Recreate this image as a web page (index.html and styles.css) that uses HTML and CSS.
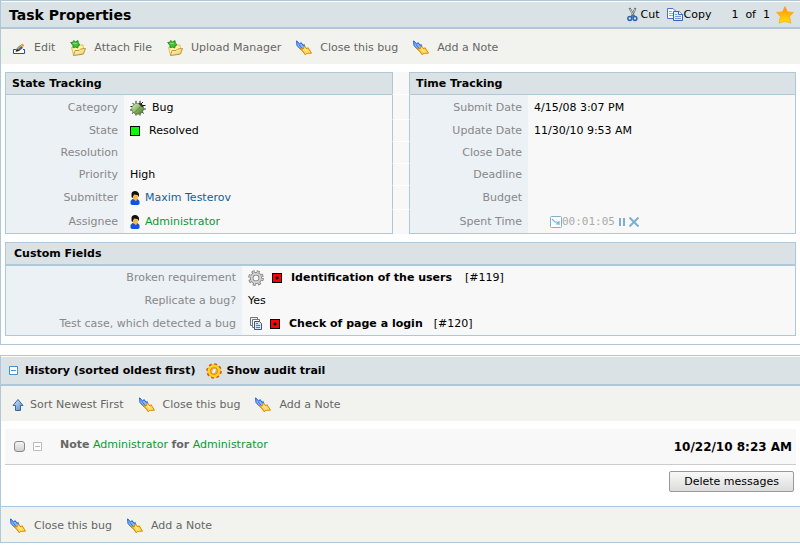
FILE: index.html
```html
<!DOCTYPE html>
<html lang="en">
<head>
<meta charset="utf-8">
<title>Task Properties</title>
<link rel="stylesheet" href="styles.css">
</head>
<body>
<svg class="sprite" aria-hidden="true">
  <defs>
    <linearGradient id="leaf" x1="0" y1="0" x2="1" y2="1"><stop offset="0" stop-color="#e2f0cc"/><stop offset=".5" stop-color="#8fb765"/><stop offset="1" stop-color="#3f7420"/></linearGradient>
    <linearGradient id="gold" x1="0" y1="0" x2="0" y2="1"><stop offset="0" stop-color="#ff8a08"/><stop offset="1" stop-color="#ffe800"/></linearGradient>
    <linearGradient id="folder" x1="0" y1="0" x2="1" y2="1"><stop offset="0" stop-color="#fffde0"/><stop offset="1" stop-color="#f0c650"/></linearGradient>
    <linearGradient id="sky" x1="0" y1="0" x2="1" y2="1"><stop offset="0" stop-color="#d8eafc"/><stop offset="1" stop-color="#4f86c6"/></linearGradient>
    <symbol id="i-edit" viewBox="0 0 16 16">
      <path d="M6 9.500H3.500v4h11v-4H13" fill="#fff" stroke="#0a50e0"/>
      <path d="M5.500 12L7 8 9.500 10.700z" fill="#222"/><path d="M6.800 8.300L10.300 5 13 7.700 9.300 10.900z" fill="#4a5f86"/><path d="M7.500 9l4-3.600" stroke="#d8a868" stroke-width="1.200"/><path d="M11 4.800L12.300 3.500l2 2-1.400 1.600z" fill="#f09a10"/>
    </symbol>
    <symbol id="i-folder" viewBox="0 0 16 16">
      <path d="M1.500 7.500L4 6.500 8 7l1.500-2H13l.5 4L12 14.500 3.500 15z" fill="#fff3a8" stroke="#d8b24a" stroke-width=".8"/>
      <path d="M3.500 15.500L5 10.500 9 10.500 10.500 9 15.500 8.500 13.500 14z" fill="url(#folder)" stroke="#b08624" stroke-width=".8"/>
      <path d="M.7 2.500L3 2.200 3.700.5 5.500 2 8 .6 8.200 3 10 4.700 8 5.800 7.700 8 5.500 7 3.200 7.800 2.900 5.400z" fill="#45c034" stroke="#188a1c" stroke-width=".9"/><path d="M3 3.300l4 .4" stroke="#8fe378"/>
    </symbol>
    <symbol id="i-note" viewBox="0 0 16 16">
      <path d="M.6.8L3.600 4 5.200 2.600 7 5.500 8.200 4.500 8.700 8 6 10 4 8.800 1 5.500z" fill="#8ab8f4" stroke="#1558e0"/>
      <path d="M3 4.500L6.500 9" stroke="#1558e0" stroke-width=".8"/>
      <path d="M4 8.500L7 9 8.600 5.800 10.700 9 12 7.600 15.500 13.200 11 13.300 9 14.700 7.500 12z" fill="#ffd95c" stroke="#e08a08"/>
      <path d="M8.700 8.500l2.800 4" stroke="#fff2ad"/><path d="M5.500 10l3 3.500" stroke="#e08a08" stroke-width=".8"/>
    </symbol>
    <symbol id="i-cut" viewBox="0 0 16 16">
      <path d="M4.500 1l5 9M10.500 1L6.500 10" stroke="#686d75" stroke-width="2"/><path d="M5 2l3 5.500M10 2L8.500 5.500" stroke="#dde3e8" stroke-width=".8"/>
      <circle cx="4.800" cy="11.500" r="1.900" fill="#dae2e5" stroke="#2b62b8" stroke-width="1.500"/><circle cx="10" cy="11.500" r="1.900" fill="#dae2e5" stroke="#2b62b8" stroke-width="1.500"/>
    </symbol>
    <symbol id="i-copy" viewBox="0 0 16 16">
      <path d="M.5 1.500H6L8.500 4v7.500h-8z" fill="#fff" stroke="#4674c4"/><path d="M2 4.500h3M2 6.500h4M2 8.500h4" stroke="#8fadde"/>
      <path d="M6.500 4.500H12L15.500 7.500V13.500h-9z" fill="#e4effd" stroke="#3763b5"/><path d="M11.500 4.500v3h4" fill="#fff" stroke="#3763b5"/><path d="M8 7.500h2M8 9.500h6M8 11.500h6" stroke="#7399da"/>
    </symbol>
    <symbol id="i-star" viewBox="0 0 18 18"><path d="M9 .5l2.500 5.400 6 .5-3.900 4 1.200 6.800Q9 14 3.200 17.200L4.400 10.400.5 6.400l6-.5z" fill="url(#gold)" stroke="#ffa51c" stroke-width=".8"/></symbol>
    <symbol id="i-bug" viewBox="0 0 16 16">
      <path d="M2.500 3l2 2M6 .800v3M10 .800v3M13 2l-2 2M.5 6.500h3M0 10h3M2 13.500l2-1.500M6 15.500v-2M10 15.500v-2M13.500 13.500l-1.500-2M15.800 9H13M15.500 5.500h-3" stroke="#222"/>
      <ellipse cx="7.600" cy="8.800" rx="5.900" ry="5.500" fill="url(#leaf)" stroke="#50702f" stroke-width=".6"/>
      <path d="M8.300 3.200Q12.500 2 13.700 7.500L11 6.500z" fill="#2b2d2b"/><path d="M10.800 6.500L4.500 12.800" stroke="#547b35" stroke-width=".8"/>
    </symbol>
    <symbol id="i-user" viewBox="0 0 10 14">
      <path d="M.5 13V10L2.500 8h5l2 2v3l-1.500 1h-6z" fill="#0a55e4"/><path d="M3.500 8L6 10.500 7.500 8z" fill="#f3a91d"/>
      <ellipse cx="5.300" cy="5.700" rx="2.700" ry="3.200" fill="#f8b84a"/><path d="M1.500 6V2.500Q2 0 5 0t4 3v3L7.500 4 4 3.500 3 5.500v1.500z" fill="#111"/>
    </symbol>
    <symbol id="i-gear" viewBox="0 0 16 16">
      <circle cx="8" cy="8" r="6.500" fill="none" stroke="#7c7c7c" stroke-width="2.600" stroke-dasharray="2.900 2.205"/><circle cx="8" cy="8" r="4.300" fill="none" stroke="#7c7c7c" stroke-width="3.600"/>
      <circle cx="8" cy="8" r="6" fill="none" stroke="#d2d2d2" stroke-width="2" stroke-dasharray="1.500 3.212" stroke-dashoffset="-.6"/><circle cx="8" cy="8" r="4.300" fill="none" stroke="#d2d2d2" stroke-width="2"/>
    </symbol>
    <symbol id="i-stack" viewBox="0 0 16 16">
      <path d="M2.500 1.500h7v8h-7z" fill="#eef1f4" stroke="#6d7883"/><path d="M4.500 3.500h7v8h-7z" fill="#f8fafc" stroke="#6d7883"/>
      <path d="M6.500 5.500h5l2 2v6h-7z" fill="#d4e6fb" stroke="#46586c"/><path d="M8 7.500h2M8 9.500h4M8 11.500h4" stroke="#3d82d2"/>
    </symbol>
    <symbol id="i-audit" viewBox="0 0 16 16">
      <circle cx="8" cy="8" r="6.600" fill="none" stroke="#dc5a06" stroke-width="2.400" stroke-dasharray="2.800 2.384"/><circle cx="8" cy="8" r="4.600" fill="none" stroke="#e57c05" stroke-width="3.800"/><circle cx="8" cy="8" r="5" fill="none" stroke="#ffd51b" stroke-width="2.400"/>
      <ellipse cx="8" cy="8" rx="2" ry="3" transform="rotate(25 8 8)" fill="#f2f5f6" stroke="#e57c05" stroke-width=".6"/>
    </symbol>
    <symbol id="i-up" viewBox="0 0 16 16"><path d="M8 2.500L13 8.500H10.500v5h-5v-5H3z" fill="url(#sky)" stroke="#3f6699"/></symbol>
    <symbol id="i-minus" viewBox="0 0 9 9"><path d="M.5.5h8v8h-8z" fill="#fff" stroke="currentColor"/><path d="M2 4.500h5" stroke="currentColor"/></symbol>
    <symbol id="i-clock" viewBox="0 0 12 12"><rect x=".5" y=".5" width="11" height="11" rx="1" fill="#fff" stroke="#7db0cf"/><path d="M2 3l3 3h2l2 2V5M9 8H6" fill="none" stroke="#7db0cf" stroke-width="1.200"/></symbol>
    <symbol id="i-pause" viewBox="0 0 6 8"><path d="M1 0v8M5 0v8" stroke="#7db0cf" stroke-width="2"/></symbol>
    <symbol id="i-close" viewBox="0 0 10 10"><path d="M.5.5l9 9M9.500.5l-9 9" stroke="#7db0cf" stroke-width="2"/></symbol>
  </defs>
</svg>

<main class="page">
  <section class="block">
    <header class="block-head">
      <h1>Task Properties</h1>
      <div class="head-tools">
        <a href="#cut" class="tool-link"><svg class="icon"><use href="#i-cut"/></svg>Cut</a>
        <a href="#copy" class="tool-link copy"><svg class="icon"><use href="#i-copy"/></svg>Copy</a>
        <span class="pager"><span>1</span><span>of</span><span>1</span></span>
        <svg class="star"><use href="#i-star"/></svg>
      </div>
    </header>
    <nav class="toolbar">
      <a href="#edit"><svg class="icon"><use href="#i-edit"/></svg>Edit</a>
      <a href="#attach"><svg class="icon"><use href="#i-folder"/></svg>Attach File</a>
      <a href="#upload"><svg class="icon"><use href="#i-folder"/></svg>Upload Manager</a>
      <a href="#close"><svg class="icon"><use href="#i-note"/></svg>Close this bug</a>
      <a href="#note"><svg class="icon"><use href="#i-note"/></svg>Add a Note</a>
    </nav>
    <div class="panels">
      <table class="props">
        <colgroup><col class="c-state"><col><col class="c-gap"><col class="c-time"><col></colgroup>
        <thead><tr><th colspan="2" scope="colgroup">State Tracking</th><td class="gap"></td><th colspan="2" scope="colgroup">Time Tracking</th></tr></thead>
        <tbody>
          <tr class="tall"><th scope="row">Category</th><td><span class="value small-gap"><svg class="icon"><use href="#i-bug"/></svg>Bug</span></td><td class="gap"></td><th scope="row">Submit Date</th><td>4/15/08 3:07 PM</td></tr>
          <tr><th scope="row">State</th><td><span class="value mark-gap"><i class="mark green"></i>Resolved</span></td><td class="gap"></td><th scope="row">Update Date</th><td>11/30/10 9:53 AM</td></tr>
          <tr><th scope="row">Resolution</th><td></td><td class="gap"></td><th scope="row">Close Date</th><td></td></tr>
          <tr><th scope="row">Priority</th><td>High</td><td class="gap"></td><th scope="row">Deadline</th><td></td></tr>
          <tr class="person"><th scope="row">Submitter</th><td><a href="#maxim" class="value user"><svg class="person-icon"><use href="#i-user"/></svg>Maxim Testerov</a></td><td class="gap"></td><th scope="row">Budget</th><td></td></tr>
          <tr class="person"><th scope="row">Assignee</th><td><a href="#admin" class="value user admin"><svg class="person-icon"><use href="#i-user"/></svg>Administrator</a></td><td class="gap"></td><th scope="row">Spent Time</th><td><span class="timer"><svg class="clock"><use href="#i-clock"/></svg><span>00:01:05</span><button type="button" aria-label="Pause"><svg class="pause"><use href="#i-pause"/></svg></button><button type="button" aria-label="Stop"><svg class="stop"><use href="#i-close"/></svg></button></span></td></tr>
        </tbody>
      </table>
      <table class="props custom">
        <colgroup><col class="c-custom"><col></colgroup>
        <thead><tr><th colspan="2" scope="colgroup">Custom Fields</th></tr></thead>
        <tbody>
          <tr class="tall"><th scope="row">Broken requirement</th><td><span class="value wide"><svg class="icon"><use href="#i-gear"/></svg><span class="value mark-gap"><i class="mark red"></i><b>Identification of the users</b></span><span class="ref">[#119]</span></span></td></tr>
          <tr><th scope="row">Replicate a bug?</th><td>Yes</td></tr>
          <tr><th scope="row">Test case, which detected a bug</th><td><span class="value small-gap"><svg class="icon"><use href="#i-stack"/></svg><span class="value mark-gap"><i class="mark red"></i><b>Check of page a login</b></span><span class="ref">[#120]</span></span></td></tr>
        </tbody>
      </table>
    </div>
  </section>

  <section class="block history">
    <header class="block-head">
      <button type="button" class="toggle" aria-label="Collapse history"><svg><use href="#i-minus"/></svg></button>
      <h2>History (sorted oldest first)</h2>
      <a href="#audit" class="audit"><svg class="icon"><use href="#i-audit"/></svg>Show audit trail</a>
    </header>
    <nav class="toolbar">
      <a href="#sort" class="sort"><svg class="icon"><use href="#i-up"/></svg>Sort Newest First</a>
      <a href="#close"><svg class="icon"><use href="#i-note"/></svg>Close this bug</a>
      <a href="#note"><svg class="icon"><use href="#i-note"/></svg>Add a Note</a>
    </nav>
    <article class="message">
      <input type="checkbox" aria-label="Select message">
      <button type="button" class="toggle pale" aria-label="Collapse message"><svg><use href="#i-minus"/></svg></button>
      <p><b>Note</b> <a href="#admin">Administrator</a> <b>for</b> <a href="#admin">Administrator</a></p>
      <time datetime="2010-10-22T08:23">10/22/10 8:23 AM</time>
    </article>
    <div class="actions"><button type="button" class="delete">Delete messages</button></div>
    <nav class="toolbar bottom">
      <a href="#close"><svg class="icon"><use href="#i-note"/></svg>Close this bug</a>
      <a href="#note"><svg class="icon"><use href="#i-note"/></svg>Add a Note</a>
    </nav>
  </section>
</main>
</body>
</html>
```
FILE: styles.css
```css
* { box-sizing: border-box; }
body { margin: 0; background: #fff; color: #000; font: 11px/14px "DejaVu Sans", Verdana, sans-serif; }
a { color: inherit; text-decoration: none; }
h1, h2, p { margin: 0; }
button { font: inherit; border: 0; padding: 0; background: none; color: inherit; }
svg { display: block; flex: none; }
.sprite { position: absolute; width: 0; height: 0; }
.icon { width: 16px; height: 16px; }

.block { border: solid #aec8da; border-width: 1px 0 1px 1px; }
.block-head { display: flex; align-items: center; height: 27px; margin-top: 1px; padding: 0 6px 0 8px; background: #dae2e5; border-bottom: 2px solid #aec8da; }
.block-head h1 { font-size: 14px; line-height: 18px; }
.block-head h2 { font-size: 11px; line-height: 14px; }
.head-tools { display: flex; align-items: center; margin-left: auto; }
.tool-link { display: flex; align-items: center; }
.copy { margin-left: 8px; }
.pager { display: flex; gap: 7px; margin: 0 6px 0 20px; }
.star { width: 18px; height: 18px; }

.toolbar { display: flex; align-items: center; gap: 15px; height: 35px; padding: 2px 0 0 9px; background: #f2f3ee; color: #666; }
.toolbar a { display: flex; align-items: center; gap: 8px; white-space: nowrap; }
.toolbar .sort { gap: 4px; }
.bottom { height: 36px; border-top: 1px solid #aec8da; }

.panels { display: flex; flex-direction: column; gap: 8px; padding: 8px 4px; }
.props { width: 100%; table-layout: fixed; border-collapse: separate; border-spacing: 0; }
.c-state { width: 119px; }
.c-gap { width: 18px; }
.c-time { width: 118px; }
.c-custom { width: 237px; }
.props th, .props td { height: 22px; padding: 0 6px; vertical-align: middle; text-align: left; font-weight: normal; white-space: nowrap; }
.props thead th { height: 23px; background: #dae2e5; border: solid #aec8da; border-width: 1px 0; font-weight: bold; }
.props tbody th { background: #ebf1f5; color: #888; text-align: right; }
.props tbody td { background: #f8f8f8; }
.props tr > :first-child { border-left: 1px solid #aec8da; }
.props tr > :last-child { border-right: 1px solid #aec8da; }
.props tbody tr:last-child > * { border-bottom: 1px solid #aec8da; }
.props .tall > * { height: 25px; }
.props .person > * { height: 24px; }
.props td.gap { padding: 0; background: #f8f8f8; border: solid #aec8da; border-width: 0 1px; border-bottom: 1px solid #fff; }
.props tbody tr:last-child > .gap { border-bottom: 0; }
.custom thead th { height: 24px; padding-left: 8px; border-bottom-width: 2px; }
.custom .tall > * { height: 24px; }
.custom tbody tr:last-child > * { height: 24px; }

.value { display: flex; align-items: center; }
.wide { gap: 8px; }
.small-gap { gap: 6px; }
.mark-gap { gap: 9px; }
.mark { width: 10px; height: 10px; border: 1px solid #000; }
.green { background: #0f0; }
.red { background: radial-gradient(circle, #000 1px, #f00 2px); }
.ref { margin-left: 5px; }
.user { gap: 5px; color: #0f6399; }
.user.admin { color: #0a9a34; }
.person-icon { width: 10px; height: 14px; }
.timer { display: flex; align-items: center; padding-left: 16px; color: #aaa; font: 11px/14px "DejaVu Sans Mono", monospace; }
.clock { width: 12px; height: 12px; }
.timer button { margin-left: 4px; }
.pause { width: 6px; height: 8px; }
.stop { width: 10px; height: 10px; }

.history { margin-top: 10px; }
.history .block-head { height: 29px; }
.toggle { width: 9px; height: 9px; color: #4a8fd4; }
.toggle svg { width: 9px; height: 9px; }
.toggle.pale { color: #bbb; margin: 0 18px 0 8px; }
.history h2 { margin-left: 7px; }
.audit { display: flex; align-items: center; gap: 4px; margin-left: 11px; font-weight: bold; }
.message { display: flex; align-items: center; height: 36px; margin: 8px 4px 0; padding: 0 4px 0 9px; background: #f8f8f8; border-bottom: 1px solid #ccc; }
.message input { appearance: none; width: 11px; height: 11px; margin: 0; border: 1px solid #888; border-radius: 3px; background: linear-gradient(#f4f4f4, #d0d0d0); }
.message p { flex: 1; padding-bottom: 4px; color: #0a9a34; }
.message b { color: #666; }
.message time { font-size: 12px; font-weight: bold; }
.actions { display: flex; justify-content: flex-end; padding: 6px 6px 14px; }
.delete { height: 21px; padding: 0 14px; border: 1px solid #999; border-radius: 2px; background: linear-gradient(#f8f8f8, #dcdcdc); }
```
